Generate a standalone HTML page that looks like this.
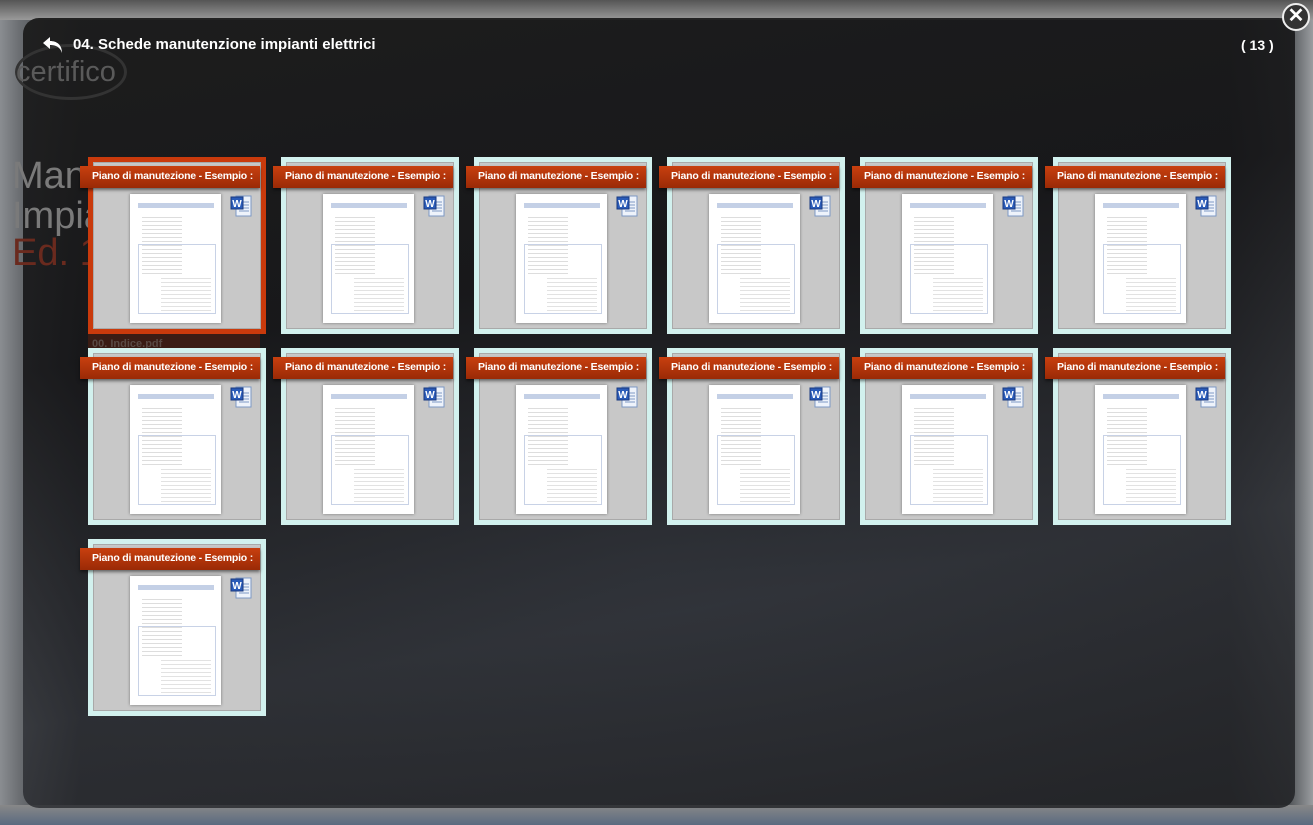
<!DOCTYPE html>
<html><head><meta charset="utf-8"><style>
*{margin:0;padding:0;box-sizing:border-box}
html,body{width:1313px;height:825px;overflow:hidden;background:#3a3d42;font-family:"Liberation Sans",sans-serif}
.bg{position:absolute;inset:0;background:
radial-gradient(ellipse 700px 300px at 650px 560px,rgba(120,140,170,.35),transparent),
linear-gradient(90deg,#8a8d91 0,#6a6d71 20px,#2a2c30 80px,#2a2c30 1230px,#55585c 1290px,#9a9da0 1313px),
#2a2c30}
.bgtop{position:absolute;left:0;right:0;top:0;height:20px;background:linear-gradient(#555,#9a9a9a)}
.bgbot{position:absolute;left:0;right:0;bottom:0;height:20px;background:linear-gradient(#888,#5a6a80)}
.panel{position:absolute;left:23px;top:18px;width:1272px;height:790px;border-radius:16px;background:
linear-gradient(170deg,rgba(28,28,28,.95) 0,rgba(22,22,24,.9) 35%,rgba(45,47,52,.82) 70%,rgba(34,35,38,.88) 100%)}
.logo{position:absolute;left:16px;top:56px;font-size:29px;color:#5a5a5a;letter-spacing:0px}
.logoring{position:absolute;left:15px;top:44px;width:112px;height:56px;border:3px solid #333;border-radius:50%}
.side{position:absolute;left:12px;font-size:38px;color:#7a7a7a}
.title{position:absolute;left:73px;top:36px;color:#fff;font-weight:bold;font-size:15px}
.count{position:absolute;left:1241px;top:37px;color:#fff;font-weight:bold;font-size:14px}
.close{position:absolute;left:1282px;top:3px;width:28px;height:28px;border-radius:50%;background:#333;border:2px solid #eee;color:#fff;font-size:20px;font-weight:bold;text-align:center;line-height:23px}
.tile{position:absolute;width:178px;height:177px;border:5px solid #d2f1ee;background:#c8c8c8}
.tile.sel{border-color:#c93a0c}
.tile .in{position:absolute;inset:0;border:1px solid #a9a9a9}
.lbl{position:absolute;width:180px;height:22px;background:linear-gradient(#c8400f,#9a2a06);color:#fff;font-size:10.5px;font-weight:bold;line-height:21px;padding-left:12px;white-space:nowrap;overflow:hidden;box-shadow:0 2px 3px rgba(0,0,0,.5);letter-spacing:-.2px}
.doc{position:absolute;width:91px;height:129px;background:#fff;box-shadow:0 0 3px rgba(0,0,0,.4);
background-image:linear-gradient(#c4d0e6,#c4d0e6),repeating-linear-gradient(#fff 0,#fff 3px,#ddd 3px,#ddd 4px);
background-size:76px 5px,40px 60px;background-position:8px 9px,12px 20px;background-repeat:no-repeat}
.doc:after{content:"";position:absolute;left:8px;top:50px;width:76px;height:68px;border:1px solid #c8d2e6;background:repeating-linear-gradient(#fff 0,#fff 3px,#e2e2e2 3px,#e2e2e2 4px);background-size:50px 60px;background-position:22px 30px;background-repeat:no-repeat}
.w{position:absolute;width:22px;height:24px}
.idx{position:absolute;left:88px;top:333px;width:172px;height:20px;background:#3a1c14;color:#5a4a44;font-size:11px;font-weight:bold;padding:5px 0 0 4px}
</style></head><body>
<div class="bg"></div><div class="bgtop"></div><div class="bgbot"></div>
<div class="panel"></div>
<div class="logoring"></div>
<div class="logo">certifico</div>
<div class="side" style="top:155px">Man</div>
<div class="side" style="top:195px">Impia</div>
<div class="side" style="top:232px;color:#6a2a1e">Ed. 1</div>
<svg style="position:absolute;left:41px;top:35px" width="24" height="20" viewBox="0 0 24 20"><path d="M9 2 L2 8 L9 14 L9 10 C15 10 19 12 21 18 C21 10 16 6 9 6 Z" fill="#fff"/></svg>
<div class="title">04. Schede manutenzione impianti elettrici</div>
<div class="count">( 13 )</div>
<div class="close">✕</div>
<div class="idx">00. Indice.pdf</div>

<div class="tile sel" style="left:88px;top:157px"><div class="in"></div></div>
<div class="tile" style="left:281px;top:157px"><div class="in"></div></div>
<div class="tile" style="left:474px;top:157px"><div class="in"></div></div>
<div class="tile" style="left:667px;top:157px"><div class="in"></div></div>
<div class="tile" style="left:860px;top:157px"><div class="in"></div></div>
<div class="tile" style="left:1053px;top:157px"><div class="in"></div></div>
<div class="tile" style="left:88px;top:348px"><div class="in"></div></div>
<div class="tile" style="left:281px;top:348px"><div class="in"></div></div>
<div class="tile" style="left:474px;top:348px"><div class="in"></div></div>
<div class="tile" style="left:667px;top:348px"><div class="in"></div></div>
<div class="tile" style="left:860px;top:348px"><div class="in"></div></div>
<div class="tile" style="left:1053px;top:348px"><div class="in"></div></div>
<div class="tile" style="left:88px;top:539px"><div class="in"></div></div>

<div class="doc" style="left:130px;top:194px"></div><div class="doc" style="left:323px;top:194px"></div><div class="doc" style="left:516px;top:194px"></div><div class="doc" style="left:709px;top:194px"></div><div class="doc" style="left:902px;top:194px"></div><div class="doc" style="left:1095px;top:194px"></div>
<div class="doc" style="left:130px;top:385px"></div><div class="doc" style="left:323px;top:385px"></div><div class="doc" style="left:516px;top:385px"></div><div class="doc" style="left:709px;top:385px"></div><div class="doc" style="left:902px;top:385px"></div><div class="doc" style="left:1095px;top:385px"></div>
<div class="doc" style="left:130px;top:576px"></div>

<div class="lbl" style="left:80px;top:166px">Piano di manutezione - Esempio :</div>
<div class="lbl" style="left:273px;top:166px">Piano di manutezione - Esempio :</div>
<div class="lbl" style="left:466px;top:166px">Piano di manutezione - Esempio :</div>
<div class="lbl" style="left:659px;top:166px">Piano di manutezione - Esempio :</div>
<div class="lbl" style="left:852px;top:166px">Piano di manutezione - Esempio :</div>
<div class="lbl" style="left:1045px;top:166px">Piano di manutezione - Esempio :</div>
<div class="lbl" style="left:80px;top:357px">Piano di manutezione - Esempio :</div>
<div class="lbl" style="left:273px;top:357px">Piano di manutezione - Esempio :</div>
<div class="lbl" style="left:466px;top:357px">Piano di manutezione - Esempio :</div>
<div class="lbl" style="left:659px;top:357px">Piano di manutezione - Esempio :</div>
<div class="lbl" style="left:852px;top:357px">Piano di manutezione - Esempio :</div>
<div class="lbl" style="left:1045px;top:357px">Piano di manutezione - Esempio :</div>
<div class="lbl" style="left:80px;top:548px">Piano di manutezione - Esempio :</div>

<svg width="0" height="0" style="position:absolute"><defs><g id="wi"><rect x="6" y="2" width="15" height="20" fill="#eef3fb" stroke="#7d98c4"/><path d="M9 8h10M9 11h10M9 14h10M9 17h10" stroke="#7d98c4"/><rect x="1" y="3" width="12" height="12" fill="#2a5bb8" stroke="#1a3a80"/><text x="7" y="13" font-size="10" font-weight="bold" fill="#fff" text-anchor="middle" font-family="Liberation Sans">W</text></g></defs></svg>
<svg class="w" style="left:230px;top:194px" viewBox="0 0 22 24"><use href="#wi"/></svg>
<svg class="w" style="left:423px;top:194px" viewBox="0 0 22 24"><use href="#wi"/></svg>
<svg class="w" style="left:616px;top:194px" viewBox="0 0 22 24"><use href="#wi"/></svg>
<svg class="w" style="left:809px;top:194px" viewBox="0 0 22 24"><use href="#wi"/></svg>
<svg class="w" style="left:1002px;top:194px" viewBox="0 0 22 24"><use href="#wi"/></svg>
<svg class="w" style="left:1195px;top:194px" viewBox="0 0 22 24"><use href="#wi"/></svg>
<svg class="w" style="left:230px;top:385px" viewBox="0 0 22 24"><use href="#wi"/></svg>
<svg class="w" style="left:423px;top:385px" viewBox="0 0 22 24"><use href="#wi"/></svg>
<svg class="w" style="left:616px;top:385px" viewBox="0 0 22 24"><use href="#wi"/></svg>
<svg class="w" style="left:809px;top:385px" viewBox="0 0 22 24"><use href="#wi"/></svg>
<svg class="w" style="left:1002px;top:385px" viewBox="0 0 22 24"><use href="#wi"/></svg>
<svg class="w" style="left:1195px;top:385px" viewBox="0 0 22 24"><use href="#wi"/></svg>
<svg class="w" style="left:230px;top:576px" viewBox="0 0 22 24"><use href="#wi"/></svg>
</body></html>
